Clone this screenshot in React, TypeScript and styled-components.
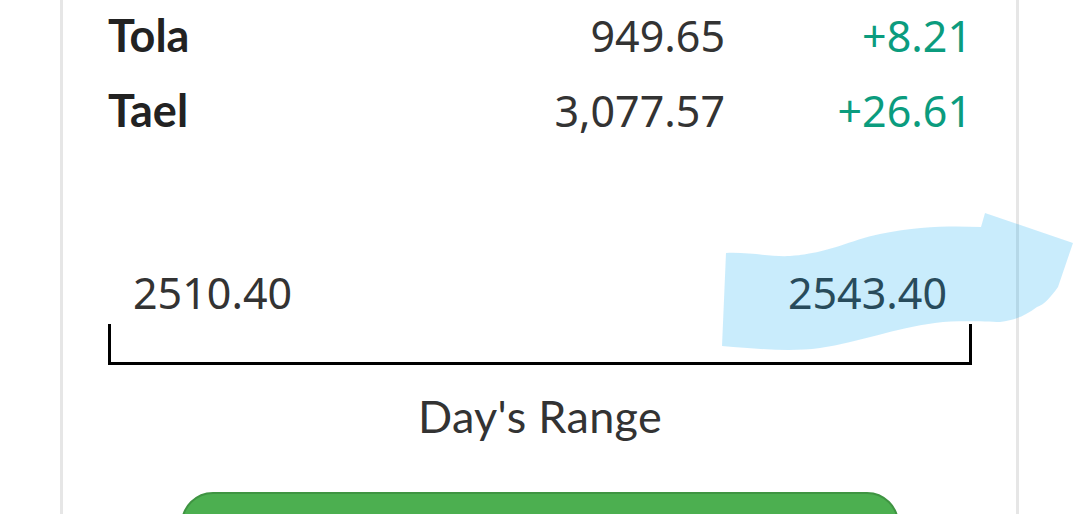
import React from 'react'
import styled, { createGlobalStyle } from 'styled-components'

const GlobalStyle = createGlobalStyle`
    html, body {
        margin: 0;
        padding: 0;
        background: #fff;
    }
    body {
        font-family: 'Lato', 'Noto Sans', sans-serif;
    }
`

const Page = styled.div`
    position: relative;
    width: 1080px;
    height: 514px;
    overflow: hidden;
    background: #fff;
`
const Card = styled.div`
    margin-left: 60px;
    width: 864px;
    min-height: 600px;
    border-left: 3px solid #e6e6e6;
    border-right: 3px solid #e6e6e6;
    padding: 0 44px 0 45px;
`
const PriceTable = styled.div`
    margin-top: -2px;
    display: grid;
    grid-template-columns: 1fr 250px 247px;
`
const Metal = styled.div`
    font-family: 'Lato', sans-serif;
    font-weight: 700;
    font-size: 45px;
    line-height: 75px;
    color: #222;
`
const Num = styled.div<{ $up?: boolean }>`
    font-family: 'Noto Sans', sans-serif;
    font-weight: 400;
    font-size: 43px;
    line-height: 75px;
    text-align: right;
    color: ${(p) => (p.$up ? '#0b9c7e' : '#333')};
`
const RangeBlock = styled.div`
    margin-top: 120px;
`
const RangeValues = styled.div`
    display: flex;
    justify-content: space-between;
    padding: 0 25px;
    font-family: 'Noto Sans', sans-serif;
    font-size: 43px;
    line-height: 50px;
    color: #333;
`
const Bracket = styled.div`
    margin-top: 6px;
    height: 38px;
    border: 3px solid #000;
    border-top: none;
`
const RangeLabel = styled.div`
    margin-top: 26px;
    text-align: center;
    font-family: 'Lato', sans-serif;
    font-size: 45px;
    line-height: 50px;
    letter-spacing: 0.3px;
    color: #333;
`
const BuyButton = styled.button`
    display: block;
    margin: 51px auto 0;
    width: 718px;
    height: 90px;
    border: 2px solid #3f9442;
    border-radius: 32px;
    background: #4caf50;
`
const Highlight = styled.svg`
    position: absolute;
    left: 0;
    top: 0;
    pointer-events: none;
`

const rows = [
    { name: 'Tola', price: '949.65', change: '+8.21' },
    { name: 'Tael', price: '3,077.57', change: '+26.61' },
]

const App: React.FC = () => {
    return (
        <Page>
            <GlobalStyle />
            <Card>
                <PriceTable>
                    {rows.map((r) => (
                        <React.Fragment key={r.name}>
                            <Metal>{r.name}</Metal>
                            <Num>{r.price}</Num>
                            <Num $up>{r.change}</Num>
                        </React.Fragment>
                    ))}
                </PriceTable>
                <RangeBlock>
                    <RangeValues>
                        <span>2510.40</span>
                        <span>2543.40</span>
                    </RangeValues>
                    <Bracket />
                    <RangeLabel>Day's Range</RangeLabel>
                </RangeBlock>
                <BuyButton type="button" />
            </Card>
            <Highlight width="1080" height="514" viewBox="0 0 1080 514">
                <path
                    d="M726 253 C750 252 770 257 790 256 C830 253 850 240 880 234 C920 226 950 226 981 227 L985 213 L1073 243 L1058 287 C1050 298 1045 304 1037 307 C1025 316 1015 320 1000 322 C985 322 960 320 935 323 C895 328 860 342 820 348 C790 352 760 349 722 346 Z"
                    fill="rgba(0,165,241,0.21)"
                />
            </Highlight>
        </Page>
    )
}

export default App
